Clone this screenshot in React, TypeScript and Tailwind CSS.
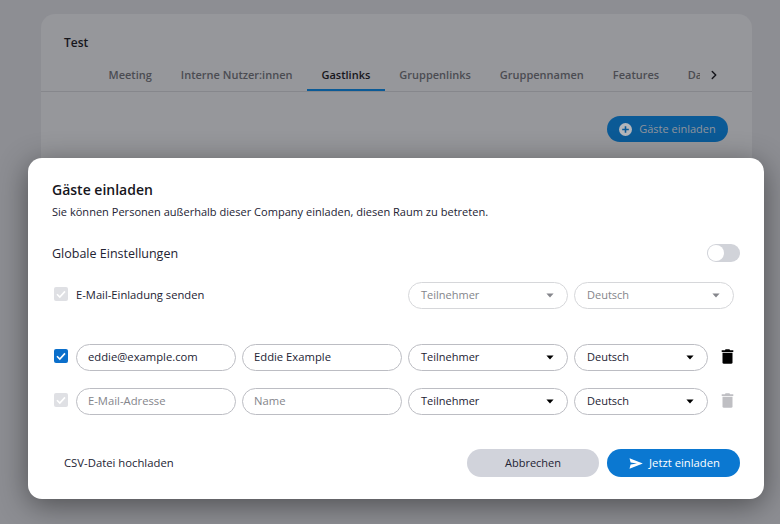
import { ChevronRight } from "lucide-react";

const tabs = ["Meeting", "Interne Nutzer:innen", "Gastlinks", "Gruppenlinks", "Gruppennamen", "Features"];

function Check({ on }: { on?: boolean }) {
    return (
        <span className={`mb-[4px] flex h-[14px] w-[14px] shrink-0 items-center justify-center rounded-[2px] ${on ? "bg-[#0b6fcb]" : "bg-[#dfe0e4]"}`}>
            <svg viewBox="0 0 14 14" className="h-[14px] w-[14px]" fill="none" stroke="white" strokeWidth="1.6">
                <path d="M3 7.2 L5.8 10 L11 4.4" />
            </svg>
        </span>
    );
}

function Field({ value, placeholder }: { value?: string; placeholder?: boolean }) {
    return (
        <div className={`flex h-[27px] w-[160px] shrink-0 items-center rounded-full border border-[#bcbdc3] pl-[11px] text-[11.25px] ${placeholder ? "text-[#84858b]" : "text-[#232333]"}`}>
            {value}
        </div>
    );
}

function Select({ value, width, muted }: { value: string; width: string; muted?: boolean }) {
    return (
        <div className={`flex h-[27px] shrink-0 items-center justify-between rounded-full border pl-3 pr-[13px] text-[11px] ${width} ${muted ? "border-[#d6d7da] text-[#84858b]" : "border-[#bcbdc3] text-[#232333]"}`}>
            <span>{value}</span>
            <svg viewBox="0 0 8 5" className={`h-[5px] w-[8px] ${muted ? "fill-[#85868c]" : "fill-black"}`}>
                <path d="M0.4 0.4 H7.6 L4 4.6 Z" />
            </svg>
        </div>
    );
}

function Trash({ muted }: { muted?: boolean }) {
    return (
        <svg viewBox="0 0 13 15" className={`mb-[3px] ml-[7px] h-[15px] w-[13px] ${muted ? "fill-[#bfbfc3]" : "fill-black"}`}>
            <path d="M4.5 0.3 H8.5 L9 1.3 H12.3 V2.9 H0.7 V1.3 H4 Z" />
            <path d="M1.5 3.8 H11.5 V13.4 Q11.5 14.8 10 14.8 H3 Q1.5 14.8 1.5 13.4 Z" />
        </svg>
    );
}

export default function App() {
    return (
        <div className="relative h-[524px] w-[780px] overflow-hidden bg-[#8d8e93] pl-[41px] pt-[14px] font-['Open_Sans','Noto_Sans',sans-serif]">
            {/* page behind the dialog */}
            <div className="h-[300px] w-[711px] rounded-t-[14px] bg-[#96979b]">
                <div className="pl-[23px] pt-[21px] text-[12px] font-semibold leading-4 text-[#16161c]">Test</div>
                <div className="mt-[8px] flex h-[33px] items-stretch overflow-hidden border-b border-[#86878c] pl-[53px] text-[11px] font-semibold text-[#4b4c52]">
                    {tabs.map((tab) => (
                        <div
                            key={tab}
                            className={`flex items-center whitespace-nowrap px-[14.5px] ${tab === "Gastlinks" ? "border-b-2 border-[#0b5a96] pt-[2px] text-[#16161c]" : ""}`}
                        >
                            {tab}
                        </div>
                    ))}
                    <div className="ml-[14px] flex w-[12px] items-center overflow-hidden">Da</div>
                    <div className="ml-[7px] flex items-center text-[#16161c]">
                        <ChevronRight size={14} strokeWidth={2.5} />
                    </div>
                </div>
                <div className="flex justify-end pr-[24px] pt-[24px]">
                    <div className="flex h-[26px] w-[121px] items-center justify-center gap-[7px] rounded-full bg-[#0b5a96] text-[11px] text-[#90949b]">
                        <span className="flex h-[13px] w-[13px] items-center justify-center rounded-full bg-[#b4b6ba]">
                            <svg viewBox="0 0 13 13" className="h-[13px] w-[13px]" stroke="#0b5a96" strokeWidth="1.6">
                                <path d="M6.5 3.2 V9.8 M3.2 6.5 H9.8" />
                            </svg>
                        </span>
                        Gäste einladen
                    </div>
                </div>
            </div>

            {/* dialog */}
            <div className="absolute left-[28px] top-[158px] h-[341px] w-[736px] rounded-[14px] bg-white px-[24px] pt-[22px] shadow-[0_6px_30px_rgba(0,0,0,0.45)]">
                <h2 className="text-[14px] font-semibold leading-5 text-[#16161c]">Gäste einladen</h2>
                <p className="mt-[4px] text-[11.05px] leading-4 text-[#232333]">
                    Sie können Personen außerhalb dieser Company einladen, diesen Raum zu betreten.
                </p>

                <div className="mt-[24px] flex h-[18px] items-center justify-between">
                    <span className="mt-[2px] text-[12.5px] text-[#232333]">Globale Einstellungen</span>
                    <div className="flex h-[18px] w-[33px] items-center rounded-full bg-[#d1d3d9] pl-[1px]">
                        <span className="h-[16px] w-[16px] rounded-full bg-white" />
                    </div>
                </div>

                <div className="mt-[20px] flex h-[27px] items-center pl-[2px]">
                    <Check />
                    <span className="ml-[8px] w-[332px] text-[11.2px] text-[#232333]">E-Mail-Einladung senden</span>
                    <Select value="Teilnehmer" width="w-[160px]" muted />
                    <div className="w-[6px]" />
                    <Select value="Deutsch" width="w-[160px]" muted />
                </div>

                <div className="mt-[35px] flex h-[27px] items-center gap-[6px] pl-[2px]">
                    <span className="mr-[2px] flex items-center"><Check on /></span>
                    <Field value="eddie@example.com" />
                    <Field value="Eddie Example" />
                    <Select value="Teilnehmer" width="w-[160px]" />
                    <Select value="Deutsch" width="w-[134px]" />
                    <Trash />
                </div>

                <div className="mt-[17px] flex h-[27px] items-center gap-[6px] pl-[2px]">
                    <span className="mr-[2px] flex items-center"><Check /></span>
                    <Field value="E-Mail-Adresse" placeholder />
                    <Field value="Name" placeholder />
                    <Select value="Teilnehmer" width="w-[160px]" />
                    <Select value="Deutsch" width="w-[134px]" />
                    <Trash muted />
                </div>

                <div className="mt-[34px] flex h-[28px] items-center pl-[12px]">
                    <span className="text-[11.3px] text-[#232333]">CSV-Datei hochladen</span>
                    <button className="ml-auto h-[28px] w-[132px] rounded-full bg-[#d1d3db] text-[11px] text-[#232333]">Abbrechen</button>
                    <button className="ml-[8px] flex h-[28px] w-[133px] items-center justify-center gap-[6px] rounded-full bg-[#0b78d1] pl-[2px] text-[11.25px] text-white">
                        <svg viewBox="0 0 14 11" className="h-[11px] w-[14px] fill-white">
                            <path d="M0.5 0.3 L13.8 5.5 L0.5 10.7 L1.6 6.5 L8 5.5 L1.6 4.5 Z" />
                        </svg>
                        Jetzt einladen
                    </button>
                </div>
            </div>
        </div>
    );
}
